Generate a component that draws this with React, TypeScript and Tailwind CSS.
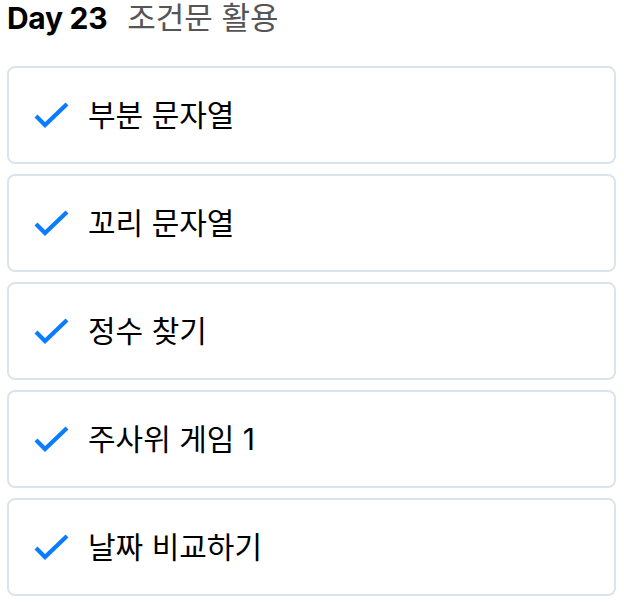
const items = ['부분 문자열', '꼬리 문자열', '정수 찾기', '주사위 게임 1', '날짜 비교하기'];

const Check = () => (
  <svg width="36" height="28" viewBox="0 0 36 28" fill="none">
    <path d="M2 15 L11 24 L33 3" stroke="#0a7cff" strokeWidth="4.2" strokeLinecap="butt" strokeLinejoin="miter" />
  </svg>
);

const App = () => {
  return (
    <div className="px-[7px] bg-white font-['Inter','Noto_Sans_CJK_KR',sans-serif]">
      <div className="flex items-baseline gap-[20px] h-[36px]">
        <span className="text-[30px] leading-[36px] font-bold text-black tracking-[-0.3px]">Day 23</span>
        <span className="text-[31px] leading-[36px] text-[#555]">조건문 활용</span>
      </div>
      <div className="flex flex-col gap-[10px] mt-[30px] w-[609px]">
        {items.map((t) => (
          <div
            key={t}
            className="flex items-center gap-[18px] h-[98px] border-2 border-[#dbe3ec] rounded-[8px] pl-[25px]"
          >
            <Check />
            <span className="text-[30px] text-black">{t}</span>
          </div>
        ))}
      </div>
    </div>
  );
};

export default App;
